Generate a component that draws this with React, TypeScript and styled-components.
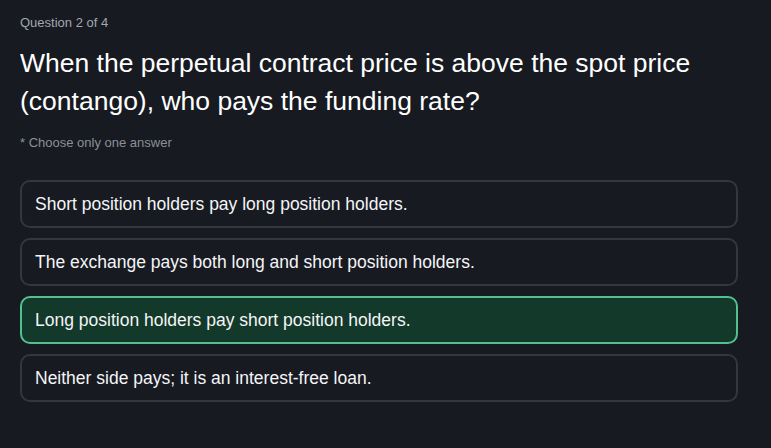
import styled, { createGlobalStyle } from 'styled-components'

const GlobalStyle = createGlobalStyle`
  html, body {
    margin: 0;
    padding: 0;
    background: #171a21;
  }

  body {
    font-family: "Liberation Sans", Arial, sans-serif;
    color: #f2f3f5;
  }
`

const Page = styled.div`
  min-height: 448px;
  padding: 15px 20px 20px;
  box-sizing: border-box;
  background: #171a21;
`

const Wrap = styled.div`
  max-width: 718px;
`

const Counter = styled.div`
  font-size: 13px;
  line-height: 16px;
  color: #a3a7ae;
`

const Question = styled.h1`
  margin: 13px 0 0;
  font-size: 26.5px;
  font-weight: 400;
  line-height: 38px;
  color: #ffffff;
`

const Hint = styled.div`
  margin-top: 15px;
  font-size: 13px;
  line-height: 16px;
  color: #8b9098;
`

const Options = styled.div`
  display: flex;
  flex-direction: column;
  gap: 10px;
  margin-top: 29px;
`

const Option = styled.button<{ $selected?: boolean }>`
  display: flex;
  align-items: center;
  height: 48px;
  padding: 0 13px;
  box-sizing: border-box;
  border-radius: 10px;
  border: 2px solid ${p => (p.$selected ? '#52c08f' : '#34373d')};
  background: ${p => (p.$selected ? '#13392a' : '#171a21')};
  color: #f4f5f7;
  font-family: inherit;
  font-size: 17.5px;
  text-align: left;
  cursor: pointer;
`

const answers = [
  'Short position holders pay long position holders.',
  'The exchange pays both long and short position holders.',
  'Long position holders pay short position holders.',
  'Neither side pays; it is an interest-free loan.'
]

function App (): JSX.Element {
  const selected = 2

  return (
    <>
      <GlobalStyle />
      <Page>
        <Wrap>
          <Counter>Question 2 of 4</Counter>
          <Question>When the perpetual contract price is above the spot price (contango), who pays the funding rate?</Question>
          <Hint>* Choose only one answer</Hint>
          <Options>
            {answers.map((text, i) => (
              <Option key={text} $selected={i === selected}>{text}</Option>
            ))}
          </Options>
        </Wrap>
      </Page>
    </>
  )
}

export default App
